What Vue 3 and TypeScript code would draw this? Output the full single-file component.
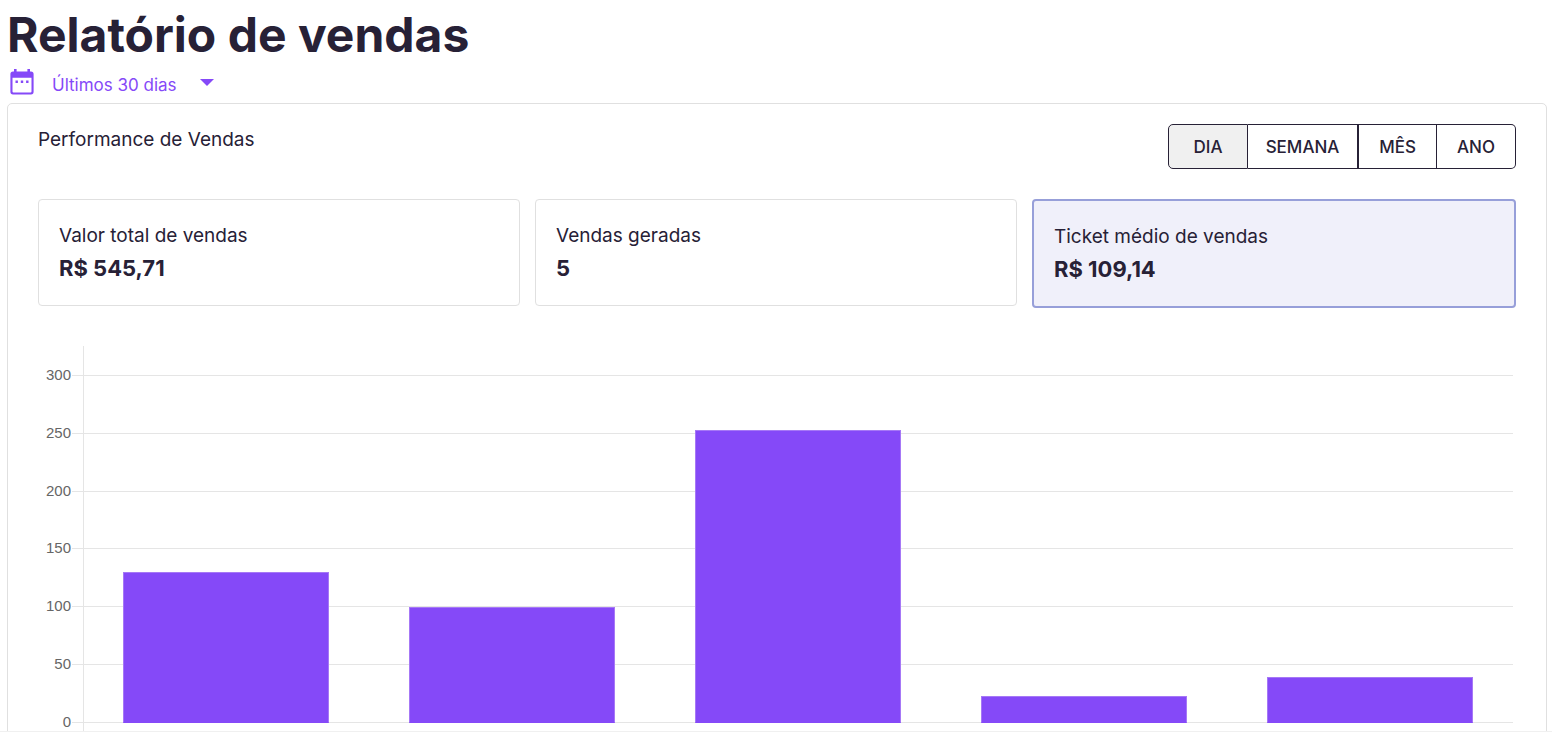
<script setup lang="ts">
import { ref } from 'vue'

interface Metric {
  id: string
  label: string
  value: string
}

const ranges: string[] = ['Últimos 30 dias', 'Últimos 60 dias', 'Últimos 90 dias']
const range = ref(ranges[0])

const periods: string[] = ['DIA', 'SEMANA', 'MÊS', 'ANO']
const period = ref('DIA')

const metrics: Metric[] = [
  { id: 'total', label: 'Valor total de vendas', value: 'R$ 545,71' },
  { id: 'count', label: 'Vendas geradas', value: '5' },
  { id: 'ticket', label: 'Ticket médio de vendas', value: 'R$ 109,14' },
]
const metric = ref('ticket')

const max = 300
const ticks: number[] = [300, 250, 200, 150, 100, 50, 0]
const bars: number[] = [130, 100, 252.71, 23, 40]
</script>

<template>
  <main class="page">
    <h1>Relatório de vendas</h1>

    <div class="range">
      <svg class="calendar" viewBox="0 0 24 26" aria-hidden="true">
        <path
          fill-rule="evenodd"
          d="M4 0h2.6v2.6h10.8V0H20v2.6h1a2.6 2.6 0 0 1 2.6 2.6v17.6a2.6 2.6 0 0 1-2.6 2.6H3a2.6 2.6 0 0 1-2.6-2.6V5.2a2.6 2.6 0 0 1 2.6-2.6h1zM2.5 8.8v13.7a1 1 0 0 0 1 1h17a1 1 0 0 0 1-1V8.8z"
        />
        <path d="M5.5 11.5h2.4v2.4H5.5zM10.8 11.5h2.4v2.4h-2.4zM16.1 11.5h2.4v2.4h-2.4z" />
      </svg>
      <div class="picker">
        <select v-model="range" aria-label="Período do relatório">
          <option v-for="r in ranges" :key="r">{{ r }}</option>
        </select>
        <svg class="arrow" viewBox="0 0 14 7" aria-hidden="true"><path d="M0 0h14L7 7z" /></svg>
      </div>
    </div>

    <section class="panel">
      <header class="panel-head">
        <h2>Performance de Vendas</h2>
        <div class="periods" role="group" aria-label="Agrupar por">
          <button
            v-for="p in periods"
            :key="p"
            type="button"
            :class="{ active: period === p }"
            :aria-pressed="period === p"
            @click="period = p"
          >{{ p }}</button>
        </div>
      </header>

      <div class="metrics">
        <button
          v-for="m in metrics"
          :key="m.id"
          type="button"
          class="metric"
          :class="{ selected: metric === m.id }"
          :aria-pressed="metric === m.id"
          @click="metric = m.id"
        >
          <span class="label">{{ m.label }}</span>
          <strong>{{ m.value }}</strong>
        </button>
      </div>

      <div class="chart">
        <div class="grid">
          <div v-for="t in ticks" :key="t" class="row">
            <span class="tick">{{ t }}</span>
            <span class="line"></span>
          </div>
        </div>
        <div class="plot">
          <div class="bars">
            <div v-for="(b, i) in bars" :key="i" class="slot">
              <div class="bar" :style="{ height: (b / max) * 100 + '%' }"></div>
            </div>
          </div>
        </div>
      </div>
    </section>
  </main>
</template>

<style>
body {
  background: #fff;
  overflow: hidden;
}
</style>

<style scoped>
.page {
  box-sizing: border-box;
  height: 100vh;
  overflow: hidden;
  padding: 0 5px 0 7px;
  border-bottom: 1px solid #f0f0f0;
  color: #272136;
  font-family: Inter, 'Noto Sans', sans-serif;
}
h1 {
  margin: 0;
  font-size: 48px;
  font-weight: 700;
  line-height: 70px;
}
.range {
  display: flex;
  align-items: center;
  height: 33px;
  padding-left: 3px;
  color: #8549f8;
}
.calendar {
  width: 24px;
  height: 26px;
  margin-bottom: 10px;
  fill: currentColor;
}
.picker {
  display: grid;
  align-items: center;
  margin: 0 0 4px 18px;
}
select {
  grid-area: 1 / 1;
  width: 168px;
  padding: 0;
  border: 0;
  background: transparent;
  color: inherit;
  font: 400 17px/32px Inter, 'Noto Sans', sans-serif;
  appearance: none;
}
.arrow {
  grid-area: 1 / 1;
  justify-self: end;
  width: 14px;
  height: 7px;
  margin: 0 6px 4px 0;
  fill: currentColor;
  pointer-events: none;
}
.panel {
  padding: 20px 30px;
  border: 1px solid #e0e0e0;
  border-radius: 5px;
}
.panel-head {
  display: flex;
  justify-content: space-between;
  align-items: flex-start;
}
h2 {
  margin: 0;
  font-size: 19px;
  font-weight: 400;
  line-height: 32px;
}
.periods {
  display: grid;
  grid-template-columns: 80px 110px 79px 79px;
}
.periods button {
  height: 45px;
  padding: 0;
  border: solid #272136;
  border-width: 1px 1px 1px 0;
  background: #fff;
  color: inherit;
  font: 500 17px/24px Inter, 'Noto Sans', sans-serif;
}
.periods button:nth-child(odd) {
  border-left-width: 1px;
}
.periods button:first-child {
  border-radius: 5px 0 0 5px;
}
.periods button:last-child {
  border-radius: 0 5px 5px 0;
}
.periods .active {
  background: #f0f0f0;
}
.metrics {
  display: flex;
  align-items: flex-start;
  gap: 15px;
  margin-top: 30px;
}
.metric {
  box-sizing: content-box;
  flex: 1 1 0;
  padding: 20px;
  border: 1px solid #e0e0e0;
  border-radius: 4px;
  background: #fff;
  color: inherit;
  font-family: inherit;
  text-align: left;
}
.metric.selected {
  border: 2px solid #979fd9;
  background: #f0f0fa;
}
.label {
  display: block;
  font-size: 19px;
  line-height: 32px;
}
.metric strong {
  display: block;
  font-size: 22px;
  line-height: 33px;
}
.chart {
  display: grid;
  grid-template-columns: 45px 1fr;
  height: 405px;
  margin: 38px 3px 0 0;
}
.grid {
  grid-area: 1 / 1 / 2 / 3;
  display: flex;
  flex-direction: column;
  justify-content: space-between;
  height: 368px;
  padding-top: 19px;
}
.row {
  display: flex;
  align-items: center;
  height: 21px;
}
.tick {
  align-self: flex-start;
  width: 33px;
  margin-right: 1px;
  color: #666;
  font: 15px/19px 'Liberation Sans', Arial, sans-serif;
  text-align: right;
}
.line {
  flex: 1;
  height: 1px;
  background: #e5e5e5;
}
.plot {
  grid-area: 1 / 2;
  border-left: 1px solid #e5e5e5;
}
.bars {
  display: flex;
  height: 348px;
  margin-left: -1px;
  padding-top: 29px;
}
.slot {
  flex: 1;
  display: flex;
  align-items: flex-end;
  justify-content: center;
}
.bar {
  box-sizing: border-box;
  width: 72%;
  border: 1px solid #a678f6;
  border-bottom-color: #8549f8;
  background: #8549f8;
}
</style>
